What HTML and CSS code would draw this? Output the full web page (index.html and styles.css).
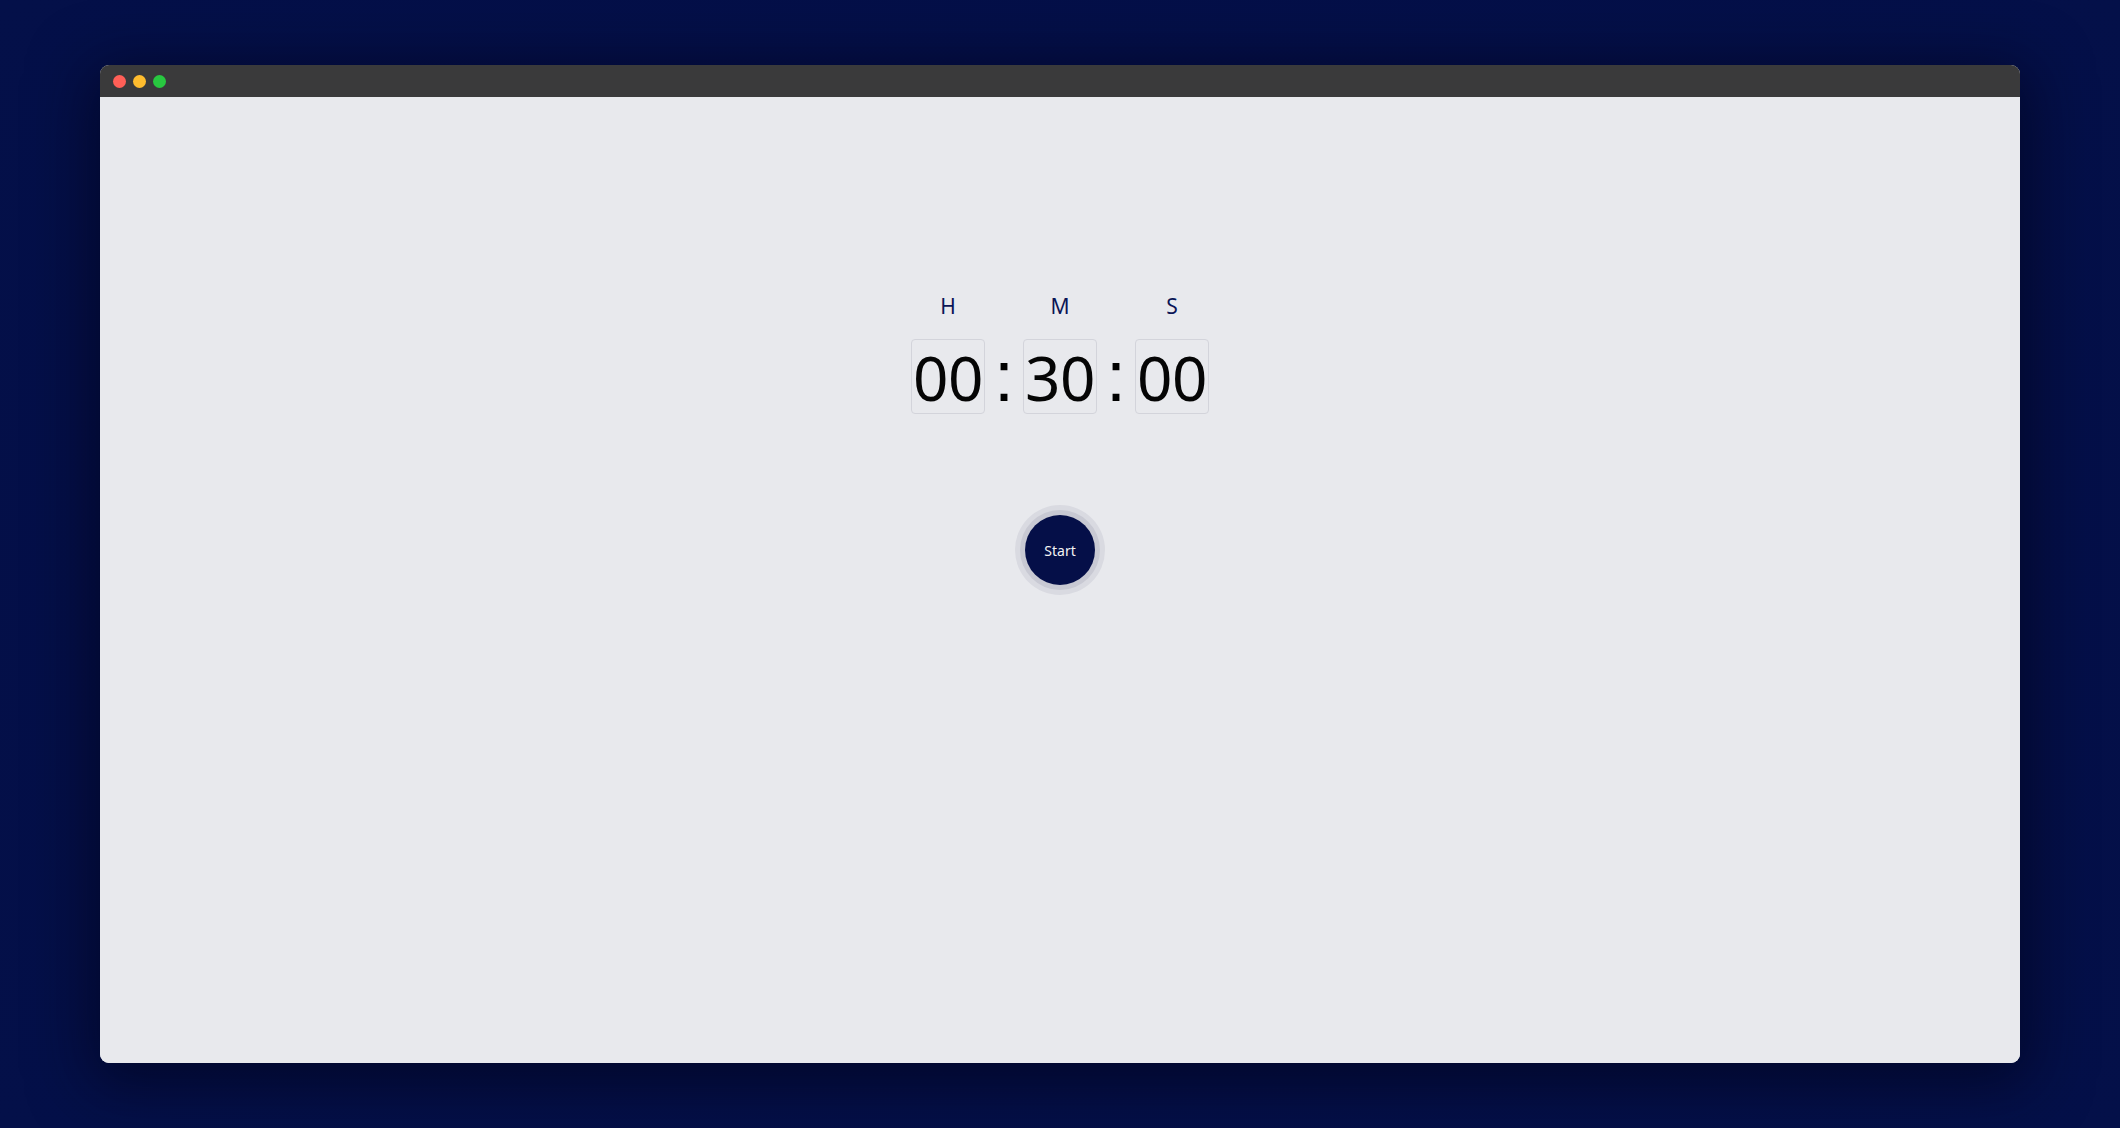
FILE: index.html
```html
<!DOCTYPE html>
<html lang="en">
<head>
<meta charset="utf-8">
<title>Timer</title>
<link rel="stylesheet" href="styles.css">
</head>
<body>
  <div class="window">
    <div class="titlebar">
      <span class="dot dot-red"></span>
      <span class="dot dot-yellow"></span>
      <span class="dot dot-green"></span>
    </div>
    <main class="content">
      <div class="timer">
        <div class="label">H</div>
        <div class="label label-m">M</div>
        <div class="label label-s">S</div>
        <div class="digits">00</div>
        <div class="sep">:</div>
        <div class="digits">30</div>
        <div class="sep">:</div>
        <div class="digits">00</div>
      </div>
      <button class="start">Start</button>
    </main>
  </div>
</body>
</html>
```

FILE: styles.css
```css
* { box-sizing: border-box; }

html, body {
  margin: 0;
  height: 100%;
}

body {
  width: 2120px;
  height: 1128px;
  padding: 65px 100px;
  background: radial-gradient(ellipse at 50% 50%, #030c3c 0%, #040f48 60%, #041049 100%);
  font-family: "Noto Sans", "Open Sans", sans-serif;
  overflow: hidden;
}

.window {
  width: 1920px;
  height: 998px;
  display: flex;
  flex-direction: column;
  border-radius: 9px;
  overflow: hidden;
  box-shadow: 0 12px 60px 10px rgba(0, 2, 20, 0.55);
  background: #e8e9ed;
}

.titlebar {
  height: 32px;
  flex: none;
  background: #3a3a3b;
  display: flex;
  align-items: center;
  gap: 7px;
  padding-left: 13px;
}

.dot {
  width: 13px;
  height: 13px;
  border-radius: 50%;
}
.dot-red { background: #ff5f57; }
.dot-yellow { background: #febc2e; }
.dot-green { background: #28c840; }

.content {
  flex: 1;
  display: flex;
  flex-direction: column;
  align-items: center;
  padding-top: 195px;
  background: #e8e9ed;
}

.timer {
  display: grid;
  grid-template-columns: 74px 38px 74px 38px 74px;
  grid-template-rows: 28px 75px;
  row-gap: 19px;
}

.label {
  grid-row: 1;
  grid-column: 1;
  text-align: center;
  font-size: 21px;
  line-height: 28px;
  color: #0b1556;
}
.label-m { grid-column: 3; }
.label-s { grid-column: 5; }

.digits {
  grid-row: 2;
  height: 75px;
  border: 1px solid #d3d4db;
  border-radius: 4px;
  text-align: center;
  font-size: 62px;
  line-height: 75px;
  color: #050505;
  letter-spacing: -0.5px;
  white-space: nowrap;
}

.sep {
  grid-row: 2;
  text-align: center;
  font-family: "Liberation Sans", Arial, sans-serif;
  font-size: 72px;
  line-height: 75px;
  color: #000;
}

.start {
  margin-top: 101px;
  width: 70px;
  height: 70px;
  border: none;
  border-radius: 50%;
  padding: 0;
  background: #050f48;
  color: #f3f3f3;
  font-family: "Noto Sans", "Open Sans", sans-serif;
  font-size: 14px;
  box-shadow: 0 0 0 5px #c8c9d3, 0 0 0 10px #d9dae1;
  cursor: pointer;
}
```
